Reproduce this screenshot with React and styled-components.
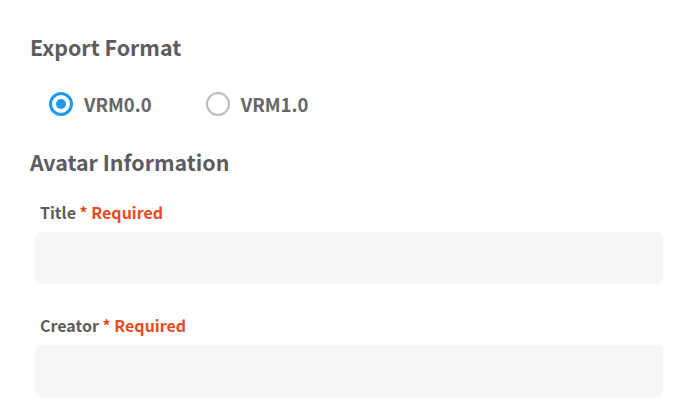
import React, { useState } from "react";
import styled, { createGlobalStyle } from "styled-components";

const GlobalStyle = createGlobalStyle`
  body {
    margin: 0;
    background: #ffffff;
    font-family: "Noto Sans CJK JP", "Noto Sans", sans-serif;
  }
`;

// Page layout
const Page = styled.div`
  width: 700px;
  height: 411px;
  box-sizing: border-box;
  padding: 32px 37px 0 30px;
  display: flex;
  flex-direction: column;
`;

const SectionTitle = styled.h2`
  margin: 0;
  font-size: 21.4px;
  font-weight: 700;
  line-height: 30px;
  color: #5c5c5c;
  margin-top: ${(p) => p.$top || "0"};
`;

const RadioRow = styled.div`
  display: flex;
  align-items: center;
  gap: 54px;
  height: 24px;
  margin-top: 30px;
  padding-left: 19px;
`;

const RadioOption = styled.label`
  display: flex;
  align-items: center;
  gap: 11px;
  font-size: 18.5px;
  font-weight: 700;
  line-height: 24px;
  color: #666666;
  cursor: pointer;
`;

const RadioCircle = styled.span`
  width: 24px;
  height: 24px;
  box-sizing: border-box;
  border-radius: 50%;
  border: ${(p) => (p.$checked ? "3px solid #1f9bea" : "2px solid #bdbdbd")};
  display: flex;
  align-items: center;
  justify-content: center;

  &::after {
    content: "";
    width: 10px;
    height: 10px;
    border-radius: 50%;
    background: ${(p) => (p.$checked ? "#1f9bea" : "transparent")};
  }
`;

const Field = styled.div`
  display: flex;
  flex-direction: column;
  padding-left: 5px;
  margin-top: ${(p) => p.$top || "0"};
`;

const Label = styled.div`
  padding-left: 5px;
  font-size: 16px;
  font-weight: 700;
  line-height: 20px;
  color: #5c5c5c;
  margin-bottom: 10px;
`;

const Required = styled.span`
  color: #ea4a1c;
`;

const Input = styled.input`
  height: 52px;
  box-sizing: border-box;
  border: none;
  border-radius: 6px;
  background: #f6f6f6;
  outline: none;
  padding: 0 14px;
  font: inherit;
`;

const options = ["VRM0.0", "VRM1.0"];

export default function App() {
  const [format, setFormat] = useState("VRM0.0");

  return (
    <>
      <GlobalStyle />
      <Page>
        <SectionTitle>Export Format</SectionTitle>
        <RadioRow>
          {options.map((o) => (
            <RadioOption key={o} onClick={() => setFormat(o)}>
              <RadioCircle $checked={format === o} />
              {o}
            </RadioOption>
          ))}
        </RadioRow>
        <SectionTitle $top="31px">Avatar Information</SectionTitle>
        <Field $top="25px">
          <Label>
            Title <Required>* Required</Required>
          </Label>
          <Input />
        </Field>
        <Field $top="31px">
          <Label>
            Creator <Required>* Required</Required>
          </Label>
          <Input />
        </Field>
      </Page>
    </>
  );
}
